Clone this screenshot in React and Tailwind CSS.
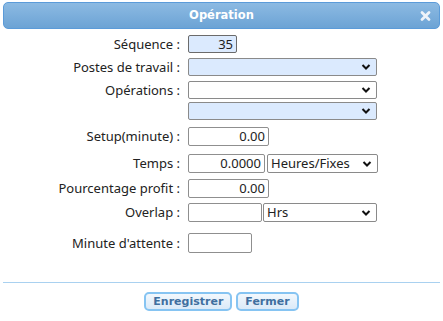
import React from "react";

const font = { fontFamily: '"Noto Sans", "DejaVu Sans", sans-serif' };

function Chevron() {
  return (
    <svg width="10" height="7" viewBox="0 0 10 7" className="absolute right-[5px] top-1/2 -translate-y-1/2">
      <path d="M1.5 1.5 L5 5 L8.5 1.5" fill="none" stroke="#111" strokeWidth="2" />
    </svg>
  );
}

function Select({ w, blue, text, h = "h-[18px]" }) {
  return (
    <div
      className={`relative ${h} border border-[#8a8a8a] rounded-[2px] ${blue ? "bg-[#dbeafe]" : "bg-white"} text-[13px] leading-none text-[#222] flex items-center pl-[3px]`}
      style={{ width: w }}
    >
      {text}
      <Chevron />
    </div>
  );
}

function Input({ w, value, h = "h-[19px]", dark }) {
  return (
    <div
      className={`${h} border ${dark ? "border-[#6b6b6b] bg-[#dbeafe]" : "border-[#8f8f8f] bg-white"} rounded-[2px] text-[13px] leading-none text-[#222] flex items-center justify-end pr-[3px]`}
      style={{ width: w }}
    >
      {value}
    </div>
  );
}

function Row({ label, children, className = "" }) {
  return (
    <div className={`flex items-center ${className}`}>
      <div className="w-[182px] pr-[2px] text-right text-[13px] leading-none text-[#222]">{label}</div>
      <div className="ml-[6px] flex items-center">{children}</div>
    </div>
  );
}

export default function App() {
  return (
    <div className="w-[443px] h-[321px] bg-white relative overflow-hidden" style={font}>
      <div className="mx-[3px] mt-[2px] h-[27px] rounded-[5px] border border-[#5b9bd9] bg-gradient-to-b from-[#8cbae2] to-[#6ca3d5] flex items-center justify-center relative">
        <span className="text-white font-bold text-[11.5px]" style={{ fontFamily: '"DejaVu Sans", sans-serif' }}>Opération</span>
        <span className="absolute right-[8px] top-1/2 -translate-y-1/2">
          <svg width="11" height="11" viewBox="0 0 11 11">
            <path d="M2 2 L9 9 M9 2 L2 9" stroke="#eef3f9" strokeWidth="2.8" strokeLinecap="round" />
          </svg>
        </span>
      </div>

      <div className="flex flex-col">
        <Row label="Séquence :" className="mt-[6px]">
          <Input w={49} value="35" h="h-[18px]" dark />
        </Row>
        <Row label="Postes de travail :" className="mt-[5px]">
          <Select w={189} blue />
        </Row>
        <Row label="Opérations :" className="mt-[5px]">
          <Select w={189} />
        </Row>
        <Row label="" className="mt-[3px]">
          <Select w={189} blue />
        </Row>
        <Row label="Setup(minute) :" className="mt-[7px]">
          <Input w={81} value="0.00" />
        </Row>
        <Row label="Temps :" className="mt-[8px]">
          <Input w={77} value="0.0000" />
          <div className="ml-[2px]">
            <Select w={111} text="Heures/Fixes" h="h-[19px]" />
          </div>
        </Row>
        <Row label="Pourcentage profit :" className="mt-[6px]">
          <Input w={81} value="0.00" />
        </Row>
        <Row label="Overlap :" className="mt-[5px]">
          <Input w={74} value="" />
          <div className="ml-[1px]">
            <Select w={114} text="Hrs" h="h-[19px]" />
          </div>
        </Row>
        <Row label="Minute d'attente :" className="mt-[11px]">
          <Input w={64} value="" h="h-[20px]" />
        </Row>
      </div>

      <div className="absolute left-[3px] right-[3px] top-[282px] h-px bg-[#a9d1f0]" />
      <div className="absolute top-[292px] left-0 right-0 flex justify-center gap-[4px]" style={{ fontFamily: '"DejaVu Sans", sans-serif' }}>
        <button className="h-[19px] px-[7px] rounded-[5px] border-2 border-[#86c4f2] bg-gradient-to-b from-[#f2f8fd] to-[#dbeaf8] text-[11px] font-bold text-[#3f6f9f] leading-none">
          Enregistrer
        </button>
        <button className="h-[19px] px-[7px] rounded-[5px] border-2 border-[#86c4f2] bg-gradient-to-b from-[#f2f8fd] to-[#dbeaf8] text-[11px] font-bold text-[#3f6f9f] leading-none">
          Fermer
        </button>
      </div>
    </div>
  );
}
